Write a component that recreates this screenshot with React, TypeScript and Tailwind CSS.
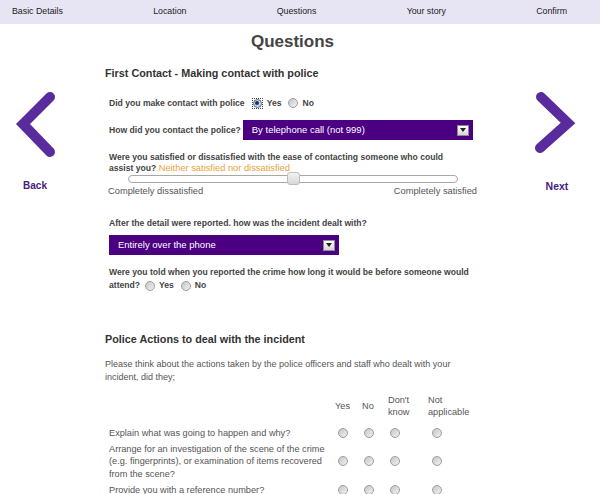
import React from "react";

const steps = ["Basic Details", "Location", "Questions", "Your story", "Confirm"];

const Radio = () => (
  <span className="inline-block w-[10px] h-[10px] rounded-full border border-[#9c9c9c] bg-gradient-to-br from-[#c6c6c6] to-[#f2f2f2] align-middle" />
);

const CheckedRadio = () => (
  <span className="inline-flex w-[11px] h-[11px] items-center justify-center border border-dotted border-[#444] align-middle">
    <span className="flex w-[9px] h-[9px] items-center justify-center rounded-full border border-[#5d6f86] bg-[#c9d5e4]">
      <span className="w-[4px] h-[4px] rounded-full bg-[#17355f]" />
    </span>
  </span>
);

const Select = ({ text, className }: { text: string; className?: string }) => (
  <div className={`h-[20px] w-[230px] bg-[#4b0082] flex items-center justify-between pl-[9px] pr-[4px] text-white text-[9.5px] font-normal ${className ?? ""}`}>
    <span>{text}</span>
    <span className="flex w-[12px] h-[11px] items-center justify-center border border-[#8c8c8c] bg-gradient-to-b from-white to-[#d6d6d6]">
      <svg width="6" height="4" viewBox="0 0 6 4">
        <path d="M0 0 L6 0 L3 4 Z" fill="#222" />
      </svg>
    </span>
  </div>
);

const Chevron = ({ dir }: { dir: "left" | "right" }) => (
  <svg width="70" height="70" viewBox="0 0 70 70">
    <polyline
      points={dir === "left" ? "50,7 23,34 50,62" : "19,7 46,33 18,58"}
      fill="none"
      stroke="#5a2b9d"
      strokeWidth="10"
      strokeLinecap="round"
      strokeLinejoin="miter"
    />
  </svg>
);

export default function App() {
  return (
    <div className="w-[600px] h-[494px] overflow-hidden bg-white font-['Liberation_Sans',Arial,sans-serif]">
      {/* steps bar */}
      <nav className="h-[24px] bg-[#e7e5f4] flex items-center justify-between pl-[12px] pr-[33px] text-[8.8px] text-[#222]">
        {steps.map((s) => (
          <span key={s}>{s}</span>
        ))}
      </nav>

      <div className="flex">
        {/* back */}
        <div className="w-[70px] flex flex-col items-center pt-[66px]">
          <Chevron dir="left" />
          <span className="mt-[20px] text-[10px] leading-[12px] font-bold text-[#4a1a7e]">Back</span>
        </div>

        {/* questions */}
        <div className="w-[375px] ml-[35px]">
          <h1 className="mt-[8px] h-[20px] leading-[20px] text-center text-[17px] font-bold text-[#444]">Questions</h1>

          <h2 className="mt-[14px] text-[10.8px] leading-[14px] font-bold text-[#333]">First Contact - Making contact with police</h2>

          <div className="ml-[4px] text-[8.6px] font-bold text-[#444]">
            <div className="mt-[16px] h-[14px] flex items-center">
              <span>Did you make contact with police</span>
              <span className="ml-[7px] flex"><CheckedRadio /></span>
              <span className="ml-[4px]">Yes</span>
              <span className="ml-[7px] flex"><Radio /></span>
              <span className="ml-[4px]">No</span>
            </div>

            <div className="mt-[10px] flex items-center">
              <span>How did you contact the police?</span>
              <Select text="By telephone call (not 999)" className="ml-[2px]" />
            </div>

            <p className="mt-[12px] leading-[11px] whitespace-nowrap">
              Were you satisfied or dissatisfied with the ease of contacting someone who could
              <br />
              assist you? <span className="font-normal text-[9.3px] text-[#e9a23b]">Neither satisfied nor dissatisfied</span>
            </p>

            <div className="relative ml-[19px] mt-[-2px] w-[330px] h-[14px] flex items-center">
              <div className="w-full h-[8px] rounded-full border border-[#a8a8a8] bg-white" />
              <div className="absolute left-[159px] top-0 w-[13px] h-[13px] rounded-[3px] border border-[#bdbdbd] bg-gradient-to-b from-[#f2f2f2] to-[#d9d9d9]" />
            </div>

            <div className="w-[369px] -ml-px flex justify-between text-[9.3px] leading-[11px] font-normal text-[#555]">
              <span>Completely dissatisfied</span>
              <span>Completely satisfied</span>
            </div>

            <p className="mt-[20px] leading-[12px]">After the detail were reported. how was the incident dealt with?</p>

            <Select text="Entirely over the phone" className="mt-[6px] pl-[7px]" />

            <p className="mt-[11px] leading-[13px] whitespace-nowrap">
              Were you told when you reported the crime how long it would be before someone would
              <br />
              <span className="inline-flex items-center">
                attend?
                <span className="ml-[5px] flex"><Radio /></span>
                <span className="ml-[4px]">Yes</span>
                <span className="ml-[7px] flex"><Radio /></span>
                <span className="ml-[4px]">No</span>
              </span>
            </p>
          </div>

          <h2 className="mt-[40px] text-[10.8px] leading-[14px] font-bold text-[#333]">Police Actions to deal with the incident</h2>

          <p className="mt-[12px] text-[9px] leading-[13px] text-[#555] whitespace-nowrap">
            Please think about the actions taken by the police officers and staff who dealt with your
            <br />
            incident, did they;
          </p>

          {/* actions table */}
          <div className="ml-[4px] text-[9.2px] text-[#555]">
            <div className="mt-[10px] grid grid-cols-[223px_26px_26px_40px_56px] items-center leading-[12px]">
              <span />
              <span className="pl-[3px]">Yes</span>
              <span className="pl-[4px]">No</span>
              <span className="pl-[4px]">Don't<br />know</span>
              <span className="pl-[4px]">Not<br />applicable</span>
            </div>

            {[
              { mt: "mt-[9px]", label: ["Explain what was going to happen and why?"] },
              {
                mt: "mt-[3px]",
                label: [
                  "Arrange for an investigation of the scene of the crime",
                  "(e.g. fingerprints), or examination of items recovered",
                  "from the scene?",
                ],
              },
              { mt: "mt-[4px]", label: ["Provide you with a reference number?"] },
            ].map((row, i) => (
              <div key={i} className={`${row.mt} grid grid-cols-[223px_26px_26px_40px_56px] items-center leading-[12.5px]`}>
                <span className="whitespace-nowrap">
                  {row.label.map((l, j) => (
                    <React.Fragment key={j}>
                      {j > 0 && <br />}
                      {l}
                    </React.Fragment>
                  ))}
                </span>
                <span className="pl-[6px] flex"><Radio /></span>
                <span className="pl-[6px] flex"><Radio /></span>
                <span className="pl-[6px] flex"><Radio /></span>
                <span className="pl-[8px] flex"><Radio /></span>
              </div>
            ))}
          </div>
        </div>

        {/* next */}
        <div className="w-[70px] ml-[42px] flex flex-col items-center pt-[66px]">
          <Chevron dir="right" />
          <span className="mt-[20px] text-[10.5px] leading-[12px] font-bold text-[#4a1a7e]">Next</span>
        </div>
      </div>
    </div>
  );
}
